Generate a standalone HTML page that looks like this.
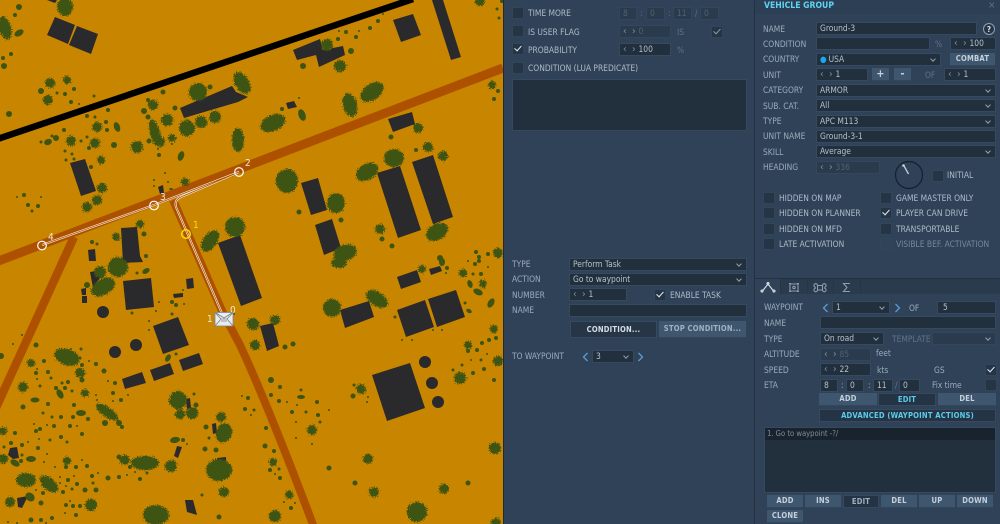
<!DOCTYPE html>
<html><head><meta charset="utf-8"><style>
html,body{margin:0;padding:0;background:#2f4258}
#r{position:relative;width:1000px;height:524px;overflow:hidden;background:#2f4258;font:8.4px "DejaVu Sans Condensed","DejaVu Sans",sans-serif;font-stretch:condensed;color:#aebbc7}
#r>div,#r>svg{position:absolute}
.l{line-height:12px;height:12px;white-space:nowrap}
.d{color:#9aabba}
.m{color:#5f7385}
.i,.s{box-sizing:border-box;background:#222f3d;border:1px solid #354a60;line-height:10px;padding-left:3px;color:#b5c1cc;white-space:nowrap;overflow:hidden}
.dim{color:#50626f;background:#2a3b4d;border-color:#33475c}
.s:after{content:"";position:absolute;right:5px;top:3px;width:3px;height:3px;border-right:1px solid #8fa0ae;border-bottom:1px solid #8fa0ae;transform:rotate(45deg)}
.c{box-sizing:border-box;width:12px;height:12px;background:#263545;border:1px solid #31465b}
.c.on:after,.c.ond:after{content:"";position:absolute;left:3px;top:0;width:3px;height:6px;border-right:1.3px solid #e8eef2;border-bottom:1.3px solid #e8eef2;transform:rotate(42deg)}
.c.ond:after{border-color:#8a9aa8}
.sp{display:inline-block;width:15.500px;color:#7f90a0;letter-spacing:1.300px;font-size:10px;line-height:9px}
.b{box-sizing:border-box;text-align:center;font-weight:bold;font-size:7.6px;background:#3f566f;color:#c5d0da;line-height:13px;border-bottom:1px solid #33475c;letter-spacing:.2px;white-space:nowrap}
.k{background:#253444;border:1px solid #354a60;line-height:11px;color:#5ccbec}
</style></head><body><div id="r">

<svg style="left:0;top:0" width="503" height="524" viewBox="0 0 503 524">
<defs><filter id="j" x="-5%" y="-5%" width="110%" height="110%" color-interpolation-filters="sRGB"><feTurbulence type="fractalNoise" baseFrequency=".85" numOctaves="2" seed="4"/><feDisplacementMap in="SourceGraphic" scale="6.500" xChannelSelector="R" yChannelSelector="G"/></filter></defs>
<rect width="503" height="524" fill="#c88500"/>
<g fill="none" stroke="#ad5000">
<path d="M-4 262L503 68" stroke-width="9"/>
<path d="M74 237L-6 412" stroke-width="8.5"/>
<path d="M173 200L223 313L240 345Q270 410 315 530" stroke-width="8"/>
</g>
<path d="M-4 139.500L413 -1" stroke="#000" stroke-width="6.500" fill="none"/>
<g fill="#2a2a2c">
<path d="M55 17L75 25 68 44 47 35zM77 26L98 34 91 54 69 45zM47 0H57L55 3zM180 108L232 86 236 92 248 97 238 102 184 118z"/>
<path d="M393 20L413 14 421 35 401 42zM432 0H443L461 57 451 60zM293 50L320 39 323 50 343 46 345 55 319 67 316 55 297 60zM286 103L294 101 297 107 288 109zM388 119L412 112 415 124 393 132zM301 183L318 178 327 210 311 215zM315 225L332 219 341 248 324 255zM377 173L400 166 421 230 398 238zM412 162L433 155 453 217 433 224z"/>
<path d="M70 163L85 159 96 191 81 196zM158 187L163 185 164 193 160 194zM121 228L137 227 140 256 143 262 123 263zM88 250L95 249 96 261 89 261zM90 272L97 271 100 278 93 288zM81 289L86 288 86 295 82 295zM82 296L87 296 87 303 82 303zM123 281L151 278 154 307 126 310zM186 279L193 278 194 288 187 289zM173 294L183 293 183 297 174 298zM218 243L240 235 262 298 241 306zM153 326L178 317 189 345 163 354z"/>
<path d="M122 379L142 372 146 383 125 389zM150 370L170 363 174 374 154 381zM179 360L199 353 203 364 183 371zM186 399L190 398 191 408 187 409zM212 424L216 423 217 433 213 434zM177 446L182 447 178 458 174 456zM217 458L226 457 226 465 217 465zM185 500L193 500 197 515 187 512zM10 448L17 447 19 458 13 459 8 455zM17 498L28 496 22 508 18 507z"/>
<path d="M260 326L273 323 279 346 267 351zM340 310L369 301 374 317 345 328zM397 277L417 270 421 282 401 289zM429 269L440 266 442 271 431 275zM397 310L425 300 434 327 406 337zM428 299L456 290 465 317 437 327zM372 375L410 363 425 408 387 421z"/>
<circle cx="103" cy="312" r="6"/><circle cx="115" cy="352" r="6"/><circle cx="136" cy="345" r="6"/><circle cx="425" cy="362" r="6"/><circle cx="432" cy="383" r="6"/><circle cx="438" cy="402" r="6"/>
</g>
<g fill="#3d5412" filter="url(#j)">
<ellipse cx="65" cy="7" rx="8" ry="9"/><ellipse cx="5" cy="28" rx="6" ry="12" transform="rotate(-15 5 28)"/><ellipse cx="198" cy="92" rx="9" ry="9"/><ellipse cx="242" cy="83" rx="7" ry="12" transform="rotate(-30 242 83)"/><ellipse cx="187" cy="128" rx="8" ry="8"/><ellipse cx="155" cy="133" rx="5" ry="14" transform="rotate(-15 155 133)"/><ellipse cx="238" cy="140" rx="6" ry="12"/>
<ellipse cx="235" cy="227" rx="10" ry="10"/><ellipse cx="210" cy="241" rx="7" ry="12" transform="rotate(35 210 241)"/><ellipse cx="118" cy="267" rx="10" ry="10"/><ellipse cx="103" cy="287" rx="13" ry="8" transform="rotate(-30 103 287)"/>
<ellipse cx="273" cy="123" rx="13" ry="8" transform="rotate(-25 273 123)"/><ellipse cx="350" cy="105" rx="7" ry="12" transform="rotate(-15 350 105)"/><ellipse cx="372" cy="92" rx="13" ry="8" transform="rotate(-35 372 92)"/><ellipse cx="394" cy="158" rx="10" ry="9"/><ellipse cx="367" cy="172" rx="12" ry="8" transform="rotate(-30 367 172)"/><ellipse cx="287" cy="181" rx="11" ry="12"/><ellipse cx="336" cy="203" rx="9" ry="10"/><ellipse cx="437" cy="232" rx="12" ry="8" transform="rotate(-30 437 232)"/><ellipse cx="345" cy="253" rx="12" ry="8" transform="rotate(-20 345 253)"/><ellipse cx="339" cy="263" rx="8" ry="5"/>
<ellipse cx="377" cy="299" rx="12" ry="7" transform="rotate(35 377 299)"/><ellipse cx="332" cy="308" rx="9" ry="9"/><ellipse cx="417" cy="512" rx="10" ry="10"/><ellipse cx="460" cy="378" rx="6" ry="6"/>
<ellipse cx="67" cy="357" rx="13" ry="8" transform="rotate(20 67 357)"/><ellipse cx="107" cy="412" rx="13" ry="5" transform="rotate(35 107 412)"/><ellipse cx="145" cy="463" rx="14" ry="7"/><ellipse cx="26" cy="480" rx="10" ry="7"/><ellipse cx="49" cy="484" rx="11" ry="6" transform="rotate(40 49 484)"/><ellipse cx="219" cy="470" rx="13" ry="11"/><ellipse cx="156" cy="515" rx="13" ry="10"/><ellipse cx="178" cy="400" rx="9" ry="9"/><ellipse cx="224" cy="433" rx="8" ry="10" transform="rotate(20 224 433)"/>
<path fill="none" stroke="#3d5412" stroke-linecap="round" stroke-width="12" d="M167 120h.01M215 117h.01M201 122h.01M137 147h.01M100 272h.01M192 413h.01M327 45h.01M340 66h.01M253 324h.01M275 516h.01M495 448h.01M91 505h.01M171 466h.01"/>
<path fill="none" stroke="#3d5412" stroke-linecap="round" stroke-width="10" d="M153 105h.01M48 100h.01M50 83h.01M160 142h.01M97 127h.01M71 141h.01M95 143h.01M102 188h.01M97 200h.01M87 207h.01M418 128h.01M428 147h.01M443 156h.01M380 229h.01M275 320h.01M253 325h.01M255 345h.01M498 361h.01M361 389h.01M374 492h.01M444 489h.01M496 523h.01M125 460h.01M180 414h.01M221 417h.01M224 492h.01M10 502h.01M23 387h.01M3 459h.01M80 373h.01M498 253h.01M312 430h.01M368 459h.01M480 1h.01"/>
<path fill="none" stroke="#3d5412" stroke-linecap="round" stroke-width="8" d="M172 138h.01M185 182h.01M101 160h.01M140 224h.01M116 237h.01M422 269h.01M463 273h.01M483 284h.01M494 329h.01M468 345h.01M273 462h.01M289 495h.01M31 363h.01M85 393h.01M67 461h.01M3 431h.01M67 80h.01M492 85h.01"/>
</g>
<g fill="#3d5412">
<ellipse cx="19" cy="33" rx="5" ry="3" transform="rotate(-30 19 33)"/><ellipse cx="181" cy="156" rx="3" ry="5" transform="rotate(20 181 156)"/><ellipse cx="117" cy="127" rx="3" ry="5" transform="rotate(-20 117 127)"/><ellipse cx="48" cy="142" rx="4" ry="3" transform="rotate(-20 48 142)"/><ellipse cx="302" cy="115" rx="3.500" ry="6" transform="rotate(-20 302 115)"/><ellipse cx="146" cy="271" rx="4" ry="2.500" transform="rotate(-30 146 271)"/><ellipse cx="470" cy="284" rx="2.500" ry="4" transform="rotate(-20 470 284)"/><ellipse cx="478" cy="292" rx="5" ry="3" transform="rotate(25 478 292)"/><ellipse cx="491" cy="303" rx="3" ry="5" transform="rotate(30 491 303)"/><ellipse cx="469" cy="311" rx="3" ry="2" transform="rotate(30 469 311)"/><ellipse cx="60" cy="394" rx="3" ry="5" transform="rotate(-30 60 394)"/><ellipse cx="35" cy="400" rx="4.500" ry="2.500"/><ellipse cx="81" cy="413" rx="5" ry="3"/><ellipse cx="31" cy="459" rx="5" ry="3"/><ellipse cx="15" cy="463" rx="5" ry="3" transform="rotate(30 15 463)"/><ellipse cx="30" cy="497" rx="5" ry="4" transform="rotate(40 30 497)"/><ellipse cx="175" cy="440" rx="5" ry="3" transform="rotate(-10 175 440)"/><ellipse cx="168" cy="358" rx="2.500" ry="4" transform="rotate(30 168 358)"/><ellipse cx="442" cy="262" rx="3" ry="4"/><ellipse cx="301" cy="397" rx="4" ry="2"/><ellipse cx="171" cy="189" rx="2" ry="1"/>
</g>
<g fill="none" stroke="#3d5412" stroke-linecap="round">
<path stroke-width="6" d="M41 91h.01M9 114h.01M56 138h.01M4 66h.01M19 7h.01M114 145h.01M87 285h.01M351 51h.01M303 66h.01M440 258h.01M271 380h.01M144 111h.01M1 356h.01M119 423h.01M105 423h.01M498 253h.01"/>
<path stroke-width="5" d="M210 87h.01M163 92h.01M148 117h.01M149 141h.01M175 108h.01M144 234h.01M391 137h.01M299 212h.01M341 220h.01M382 239h.01M392 246h.01M285 347h.01M293 344h.01M265 446h.01M353 396h.01M329 468h.01M355 483h.01M468 483h.01M36 345h.01M104 371h.01M23 407h.01M108 478h.01M85 490h.01M96 490h.01M41 503h.01M31 520h.01M119 457h.01M205 449h.01M216 450h.01M219 517h.01M196 405h.01M206 427h.01M82 380h.01"/>
<path stroke-width="4" d="M15 15h.01M3 58h.01M11 54h.01M74 89h.01M65 94h.01M71 102h.01M148 100h.01M106 122h.01M107 130h.01M87 116h.01M108 110h.01M89 148h.01M64 130h.01M159 155h.01M91 167h.01M24 195h.01M28 205h.01M38 206h.01M92 242h.01M146 256h.01M172 302h.01M176 305h.01M502 1h.01M378 21h.01M370 28h.01M346 32h.01M356 37h.01M338 39h.01M282 109h.01M416 150h.01M476 252h.01M479 257h.01M488 254h.01M498 91h.01M494 99h.01M447 268h.01M475 264h.01M479 261h.01M481 274h.01M489 340h.01M496 338h.01M482 343h.01M468 351h.01M477 350h.01M484 369h.01M473 373h.01M494 380h.01M280 387h.01M271 395h.01M279 401h.01M317 402h.01M292 412h.01M318 415h.01M266 428h.01M274 451h.01M270 470h.01M280 478h.01M291 508h.01M82 365h.01M44 361h.01M96 364h.01M36 373h.01M48 372h.01M68 382h.01M56 388h.01M65 388h.01M115 383h.01M113 393h.01M121 400h.01M48 404h.01M74 405h.01M61 417h.01M73 417h.01M88 419h.01M122 427h.01M54 426h.01M70 426h.01M40 429h.01M36 431h.01M15 433h.01M82 434h.01M61 437h.01M11 443h.01M22 445h.01M38 448h.01M21 461h.01M66 467h.01M76 467h.01M87 466h.01M92 476h.01M119 477h.01M68 480h.01M77 484h.01M43 493h.01M63 492h.01M66 505h.01M73 506h.01M80 506h.01M76 515h.01M52 518h.01M41 520h.01M130 467h.01M140 479h.01M183 440h.01M248 398h.01M245 409h.01"/>
<path stroke-width="3" d="M57 93h.01M66 160h.01M72 154h.01M65 151h.01M52 136h.01M41 142h.01M74 159h.01M159 155h.01M32 211h.01M497 9h.01M499 18h.01M465 303h.01M473 274h.01M462 365h.01M453 370h.01M481 360h.01M354 385h.01M301 390h.01M306 412h.01M320 422h.01M395 317h.01M132 313h.01M172 314h.01M137 273h.01M97 244h.01M81 349h.01M80 358h.01M51 378h.01M62 383h.01M40 386h.01M72 391h.01M43 413h.01M52 417h.01M50 440h.01M67 442h.01M4 447h.01M22 455h.01M72 489h.01M93 483h.01M176 354h.01M202 495h.01M194 394h.01M209 438h.01M254 410h.01M147 473h.01M94 96h.01M87 137h.01M81 141h.01M95 117h.01M279 469h.01"/>
<path stroke-width="2" d="M79 104h.01M172 144h.01M158 149h.01M17 197h.01M41 197h.01M165 173h.01M154 180h.01M154 186h.01M168 182h.01M159 302h.01M156 311h.01M184 304h.01M183 290h.01M149 321h.01M149 330h.01M234 314h.01M383 14h.01M359 31h.01M339 31h.01M299 98h.01M446 273h.01M468 261h.01M488 267h.01M433 330h.01M442 330h.01M402 340h.01M412 340h.01M487 354h.01M471 360h.01M287 402h.01M297 405h.01M329 410h.01M296 422h.01M296 438h.01M312 444h.01M254 410h.01M251 415h.01M275 474h.01M284 502h.01M295 503h.01M368 397h.01M367 402h.01M13 344h.01M22 335h.01M71 349h.01M89 361h.01M37 379h.01M37 369h.01M108 381h.01M96 395h.01M97 400h.01M113 401h.01M128 395h.01M118 423h.01M34 424h.01M47 425h.01M77 426h.01M39 439h.01M28 442h.01M47 454h.01M44 462h.01M82 460h.01M55 467h.01M60 477h.01M74 476h.01M98 473h.01M127 475h.01M60 483h.01M66 486h.01M42 485h.01M36 490h.01M70 501h.01M65 513h.01M46 523h.01M8 522h.01M17 523h.01M135 472h.01M187 444h.01M242 396h.01M251 415h.01"/>
</g>
<path d="M224 318L176 207Q174 200 181 197L239 172L154 205L42 245" fill="none" stroke="#efe5d0" stroke-width="2.100"/>
<path d="M224 318L176 207Q174 200 181 197L239 172L154 205L42 245" fill="none" stroke="#ad5000" stroke-width=".7"/>
<g fill="none" stroke="#fff" stroke-width="1.200"><circle cx="239" cy="172" r="4.300"/><circle cx="154" cy="205.500" r="4.300"/><circle cx="42" cy="245.500" r="4.300"/></g>
<circle cx="186" cy="234" r="4.300" fill="none" stroke="#ffe000" stroke-width="1.400"/>
<g font-family="DejaVu Sans" font-size="10" fill="#f3ead6"><text x="245" y="166">2</text><text x="160" y="200">3</text><text x="48" y="240">4</text><text x="193" y="228" fill="#ffe000">1</text><text x="230" y="313">0</text><text x="207" y="322">1</text></g>
<rect x="215" y="312.500" width="18" height="13.500" fill="#e8ecef" stroke="#7f8a94" stroke-width=".8"/>
<path d="M215 312.500L221 319 215 326M233 312.500L227 319 233 326M216 313L224 318 232 313M221 319H227M221 321H227" fill="none" stroke="#7a848c" stroke-width=".8"/>
</svg>

<div style="left:503px;top:0;width:1px;height:524px;background:#1e2a37"></div>
<div style="left:754px;top:0;width:1px;height:524px;background:#24323f"></div>

<!-- middle -->
<div class="c" style="left:512px;top:7px"></div><div class="l" style="left:528px;top:7px">TIME MORE</div>
<div class="i dim" style="left:619px;top:7px;width:18px;height:13px">8</div><div class="l m" style="left:640px;top:7px">:</div>
<div class="i dim" style="left:646px;top:7px;width:19px;height:13px">0</div><div class="l m" style="left:668px;top:7px">:</div>
<div class="i dim" style="left:673px;top:7px;width:19px;height:13px">11</div><div class="l m" style="left:695px;top:7px">/</div>
<div class="i dim" style="left:700px;top:7px;width:19px;height:13px">0</div>
<div class="c" style="left:512px;top:25px"></div><div class="l" style="left:528px;top:26px">IS USER FLAG</div>
<div class="i dim" style="left:619px;top:25px;width:52px;height:13px"><span class="sp">‹ ›</span>0</div><div class="l m" style="left:677px;top:26px">IS</div>
<div class="c ond" style="left:711px;top:26px"></div>
<div class="c on" style="left:512px;top:43px"></div><div class="l" style="left:528px;top:44px">PROBABILITY</div>
<div class="i" style="left:619px;top:43px;width:52px;height:13px"><span class="sp">‹ ›</span>100</div><div class="l m" style="left:677px;top:44px">%</div>
<div class="c" style="left:512px;top:62px"></div><div class="l" style="left:528px;top:62px">CONDITION (LUA PREDICATE)</div>
<div class="i" style="left:512px;top:79px;width:235px;height:52px"></div>

<div class="l d" style="left:512px;top:258px">TYPE</div><div class="i s" style="left:569px;top:258px;width:178px;height:13px">Perform Task</div>
<div class="l d" style="left:512px;top:273px">ACTION</div><div class="i s" style="left:569px;top:273px;width:178px;height:13px">Go to waypoint</div>
<div class="l d" style="left:512px;top:289px">NUMBER</div><div class="i" style="left:569px;top:288px;width:58px;height:13px"><span class="sp">‹ ›</span>1</div>
<div class="c on" style="left:654px;top:289px"></div><div class="l" style="left:670px;top:289px">ENABLE TASK</div>
<div class="l d" style="left:512px;top:304px">NAME</div><div class="i" style="left:569px;top:304px;width:178px;height:13px"></div>
<div class="b" style="left:570px;top:321px;width:87px;height:17px;background:#263647;border:1px solid #354a60;color:#d5dee6;line-height:15px">CONDITION...</div>
<div class="b" style="left:659px;top:321px;width:87px;height:17px;line-height:16px;color:#9fb2c2;background:#3f566f">STOP CONDITION...</div>
<div class="l d" style="left:512px;top:350px">TO WAYPOINT</div>
<div class="i s" style="left:592px;top:350px;width:42px;height:13px">3</div>
<svg style="left:580px;top:350px" width="66" height="14" fill="none" stroke="#5b9bd5" stroke-width="1.300"><path d="M7.500 3L3.500 7 7.500 11M58.500 3L62.500 7 58.500 11"/></svg>

<!-- right -->
<div style="left:755px;top:0;width:245px;height:14px;background:#2d3f54"></div>
<div class="l" style="left:764px;top:0;font-weight:bold;color:#5fd3f3;font-size:8.600px">VEHICLE GROUP</div>
<div class="l m" style="left:988px;top:0;font-size:10px">×</div>
<div class="l d" style="left:763px;top:23px">NAME</div><div class="i" style="left:816px;top:22px;width:161px;height:13px">Ground-3</div>
<svg style="left:982px;top:22px" width="14" height="14"><circle cx="7" cy="7" r="5.500" fill="#263545" stroke="#8fa2b2"/><text x="7" y="10" text-anchor="middle" font-family="DejaVu Sans" font-weight="bold" font-size="8" fill="#dfe6ec">?</text></svg>
<div class="l d" style="left:763px;top:38px">CONDITION</div><div class="i" style="left:816px;top:37px;width:114px;height:13px"></div><div class="l m" style="left:935px;top:38px">%</div>
<div class="i" style="left:950px;top:37px;width:46px;height:13px"><span class="sp">‹ ›</span>100</div>
<div class="l d" style="left:763px;top:53px">COUNTRY</div><div class="i s" style="left:816px;top:53px;width:125px;height:13px"><span style="color:#18a8f0;margin:0 2px 0 0">●</span>USA</div>
<div class="b" style="left:950px;top:53px;width:45px;height:13px;line-height:12px">COMBAT</div>
<div class="l d" style="left:763px;top:69px">UNIT</div><div class="i" style="left:816px;top:68px;width:52px;height:13px"><span class="sp">‹ ›</span>1</div>
<div class="b" style="left:872px;top:68px;width:17px;height:13px;font-size:11px;line-height:12px">+</div><div class="b" style="left:894px;top:68px;width:17px;height:13px;font-size:11px;line-height:12px">-</div>
<div class="l m" style="left:925px;top:69px">OF</div><div class="i" style="left:944px;top:68px;width:52px;height:13px"><span class="sp">‹ ›</span>1</div>
<div class="l d" style="left:763px;top:84px">CATEGORY</div><div class="i s" style="left:816px;top:84px;width:180px;height:13px">ARMOR</div>
<div class="l d" style="left:763px;top:100px">SUB. CAT.</div><div class="i s" style="left:816px;top:99px;width:180px;height:13px">All</div>
<div class="l d" style="left:763px;top:115px">TYPE</div><div class="i s" style="left:816px;top:115px;width:180px;height:13px">APC M113</div>
<div class="l d" style="left:763px;top:130px">UNIT NAME</div><div class="i" style="left:816px;top:130px;width:180px;height:13px">Ground-3-1</div>
<div class="l d" style="left:763px;top:146px">SKILL</div><div class="i s" style="left:816px;top:145px;width:180px;height:13px">Average</div>
<div class="l d" style="left:763px;top:161px">HEADING</div><div class="i dim" style="left:816px;top:161px;width:64px;height:13px"><span class="sp">‹ ›</span>336</div>
<svg style="left:894px;top:160px" width="30" height="30"><circle cx="15" cy="15" r="13.500" fill="none" stroke="#16202a" stroke-width="1.200"/><path d="M9.500 5L14.500 14" stroke="#c5d0da" stroke-width="1.300"/><circle cx="9.500" cy="5.500" r="1.300" fill="#c5d0da"/></svg>
<div class="c" style="left:932px;top:170px"></div><div class="l" style="left:947px;top:169px">INITIAL</div>
<div class="c" style="left:763px;top:192px"></div><div class="l" style="left:779px;top:192px">HIDDEN ON MAP</div>
<div class="c" style="left:763px;top:207px"></div><div class="l" style="left:779px;top:207px">HIDDEN ON PLANNER</div>
<div class="c" style="left:763px;top:223px"></div><div class="l" style="left:779px;top:223px">HIDDEN ON MFD</div>
<div class="c" style="left:763px;top:238px"></div><div class="l" style="left:779px;top:238px">LATE ACTIVATION</div>
<div class="c" style="left:880px;top:192px"></div><div class="l" style="left:896px;top:192px">GAME MASTER ONLY</div>
<div class="c on" style="left:880px;top:207px"></div><div class="l" style="left:896px;top:207px">PLAYER CAN DRIVE</div>
<div class="c" style="left:880px;top:223px"></div><div class="l" style="left:896px;top:223px">TRANSPORTABLE</div>
<div class="c" style="left:880px;top:238px;background:#2f4359"></div><div class="l m" style="left:896px;top:238px;color:#75889a">VISIBLE BEF. ACTIVATION</div>

<!-- tabs -->
<div style="left:755px;top:278px;width:245px;height:16px;background:#2a3b4e;border-top:1px solid #24323f;box-sizing:border-box"></div>
<div style="left:755px;top:279px;width:25px;height:15px;background:#2f4258"></div>
<div style="left:780px;top:279px;width:1px;height:15px;background:#26364a"></div><div style="left:807px;top:279px;width:1px;height:15px;background:#26364a"></div><div style="left:833px;top:279px;width:1px;height:15px;background:#26364a"></div><div style="left:860px;top:279px;width:1px;height:15px;background:#26364a"></div>
<svg style="left:755px;top:279px" width="108" height="15" fill="none" stroke="#dfe6ec" stroke-width="1.100">
<path d="M7.500 12L13 5 18.500 12"/><circle cx="7" cy="12" r="1"/><circle cx="13" cy="4.500" r="1"/><circle cx="19" cy="12" r="1"/>
<g stroke="#8c9dac"><path d="M35 5H43V12H35Z"/><circle cx="39" cy="8.500" r="1.200"/><path d="M34 4.500h2M42 4.500h2M34 12.500h2M42 12.500h2"/>
<path d="M62.500 6.500H67.500V11H62.500ZM62.500 6.500A1.800 1.800 0 1 0 60.700 8.300M67.500 6.500A1.800 1.800 0 1 1 69.300 8.300M62.500 11A1.800 1.800 0 1 1 60.700 9.200M67.500 11A1.800 1.800 0 1 0 69.300 9.200"/>
<path d="M95 4.500H88.500L92 8.500 88.500 12.500H95"/></g></svg>

<div class="l d" style="left:764px;top:301px">WAYPOINT</div>
<div class="i s" style="left:832px;top:301px;width:58px;height:13px">1</div>
<svg style="left:820px;top:301px" width="84" height="14" fill="none" stroke="#5b9bd5" stroke-width="1.300"><path d="M7.500 3L3.500 7 7.500 11M75.500 3L79.500 7 75.500 11"/></svg>
<div class="l d" style="left:909px;top:302px">OF</div><div class="i" style="left:937px;top:301px;width:59px;height:13px;padding-left:5px">5</div>
<div class="l d" style="left:764px;top:317px">NAME</div><div class="i" style="left:820px;top:316px;width:176px;height:13px"></div>
<div class="l d" style="left:764px;top:333px">TYPE</div><div class="i s" style="left:820px;top:332px;width:64px;height:13px">On road</div>
<div class="l m" style="left:892px;top:333px">TEMPLATE</div><div class="i s dim" style="left:932px;top:332px;width:64px;height:13px"></div>
<div class="l d" style="left:764px;top:348px">ALTITUDE</div><div class="i dim" style="left:820px;top:348px;width:51px;height:13px"><span class="sp">‹ ›</span>85</div><div class="l d" style="left:876px;top:347px">feet</div>
<div class="l d" style="left:764px;top:364px">SPEED</div><div class="i" style="left:820px;top:363px;width:51px;height:13px"><span class="sp">‹ ›</span>22</div><div class="l d" style="left:877px;top:364px">kts</div>
<div class="l d" style="left:934px;top:364px">GS</div><div class="c on" style="left:985px;top:364px"></div>
<div class="l d" style="left:764px;top:379px">ETA</div>
<div class="i" style="left:820px;top:379px;width:18px;height:13px">8</div><div class="l d" style="left:841px;top:379px">:</div>
<div class="i" style="left:846px;top:379px;width:18px;height:13px">0</div><div class="l d" style="left:868px;top:379px">:</div>
<div class="i" style="left:873px;top:379px;width:20px;height:13px">11</div><div class="l m" style="left:895px;top:379px">/</div>
<div class="i" style="left:899px;top:379px;width:21px;height:13px">0</div>
<div class="l d" style="left:932px;top:379px">Fix time</div><div class="c" style="left:985px;top:379px"></div>
<div class="b" style="left:819px;top:393px;width:58px;height:13px;line-height:12px">ADD</div>
<div class="b k" style="left:878px;top:393px;width:58px;height:13px">EDIT</div>
<div class="b" style="left:938px;top:393px;width:58px;height:13px;line-height:12px">DEL</div>
<div class="b k" style="left:819px;top:409px;width:177px;height:13px">ADVANCED (WAYPOINT ACTIONS)</div>

<div class="i" style="left:764px;top:427px;width:232px;height:66px"></div>
<div style="left:765px;top:428px;width:230px;height:12px;background:#19232e"></div>
<div class="l" style="left:767px;top:428px;color:#7f8d9a;font-size:7.600px">1. Go to waypoint -?/</div>

<div class="b" style="left:767px;top:495px;width:36px;height:13px;line-height:12px">ADD</div>
<div class="b" style="left:805px;top:495px;width:36px;height:13px;line-height:12px">INS</div>
<div class="b k" style="left:843px;top:495px;width:36px;height:13px;color:#9fb2c2">EDIT</div>
<div class="b" style="left:881px;top:495px;width:36px;height:13px;line-height:12px">DEL</div>
<div class="b" style="left:919px;top:495px;width:36px;height:13px;line-height:12px">UP</div>
<div class="b" style="left:957px;top:495px;width:36px;height:13px;line-height:12px">DOWN</div>
<div class="b" style="left:767px;top:510px;width:36px;height:13px;line-height:12px">CLONE</div>
</div></body></html>
